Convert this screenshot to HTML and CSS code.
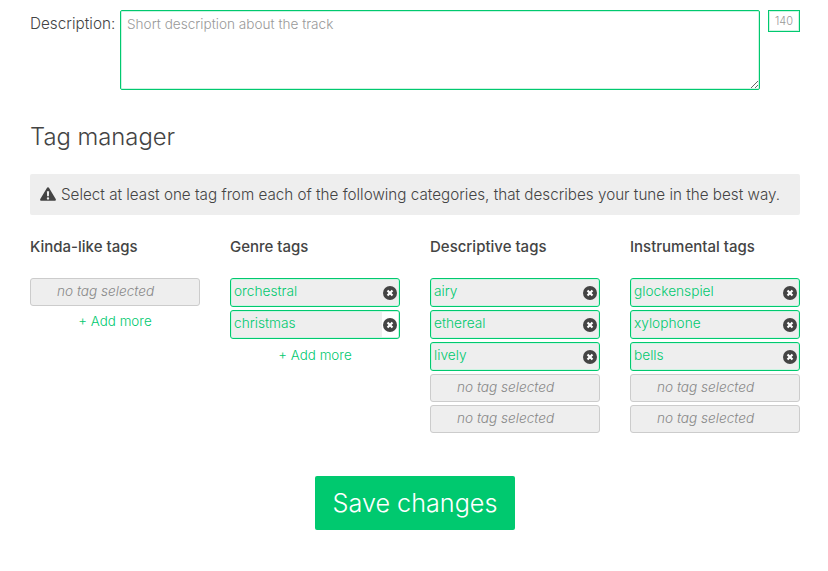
FILE: index.html
```html
<html>
  <head>
    <title>Tag manager</title>
    <link rel="stylesheet" href="styles.css">
  </head>
  <body>
    <div class="page">
      <div class="description-row">
        <label class="description-label" for="description">Description:</label>
        <textarea id="description" class="description-input" placeholder="Short description about the track"></textarea>
        <div class="counter">140</div>
      </div>

      <h2 class="section-title">Tag manager</h2>

      <div class="notice">
        <svg class="notice-icon" viewBox="0 0 16 14"><path fill-rule="evenodd" d="M8 0.2c.5 0 .9.3 1.1.7l6.6 11.2c.5.8-.1 1.7-1 1.7H1.3c-.9 0-1.5-.9-1-1.7L6.9.9C7.1.5 7.5.2 8 .2zM6.9 4.2l.2 5h1.8l.2-5zM8 10.2a1.2 1.2 0 1 0 0 2.4 1.2 1.2 0 0 0 0-2.4z"/></svg>
        <span>Select at least one tag from each of the following categories, that describes your tune in the best way.</span>
      </div>

      <div class="tag-columns">
        <div class="tag-column">
          <h4 class="tag-heading">Kinda-like tags</h4>
          <div class="tag-empty">no tag selected</div>
          <a class="add-more">+ Add more</a>
        </div>

        <div class="tag-column">
          <h4 class="tag-heading">Genre tags</h4>
          <div class="tag"><span class="tag-name">orchestral</span><span class="tag-remove"><svg viewBox="0 0 13 13"><circle cx="6.5" cy="6.5" r="6.5"/><path d="M4.2 4.2l4.6 4.6M8.8 4.2l-4.6 4.6"/></svg></span></div>
          <div class="tag tag-hover"><span class="tag-name">christmas</span><span class="tag-remove"><svg viewBox="0 0 13 13"><circle cx="6.5" cy="6.5" r="6.5"/><path d="M4.2 4.2l4.6 4.6M8.8 4.2l-4.6 4.6"/></svg></span></div>
          <a class="add-more add-more-low">+ Add more</a>
        </div>

        <div class="tag-column">
          <h4 class="tag-heading">Descriptive tags</h4>
          <div class="tag"><span class="tag-name">airy</span><span class="tag-remove"><svg viewBox="0 0 13 13"><circle cx="6.5" cy="6.5" r="6.5"/><path d="M4.2 4.2l4.6 4.6M8.8 4.2l-4.6 4.6"/></svg></span></div>
          <div class="tag"><span class="tag-name">ethereal</span><span class="tag-remove"><svg viewBox="0 0 13 13"><circle cx="6.5" cy="6.5" r="6.5"/><path d="M4.2 4.2l4.6 4.6M8.8 4.2l-4.6 4.6"/></svg></span></div>
          <div class="tag"><span class="tag-name">lively</span><span class="tag-remove"><svg viewBox="0 0 13 13"><circle cx="6.5" cy="6.5" r="6.5"/><path d="M4.2 4.2l4.6 4.6M8.8 4.2l-4.6 4.6"/></svg></span></div>
          <div class="tag-empty">no tag selected</div>
          <div class="tag-empty">no tag selected</div>
        </div>

        <div class="tag-column">
          <h4 class="tag-heading">Instrumental tags</h4>
          <div class="tag"><span class="tag-name">glockenspiel</span><span class="tag-remove"><svg viewBox="0 0 13 13"><circle cx="6.5" cy="6.5" r="6.5"/><path d="M4.2 4.2l4.6 4.6M8.8 4.2l-4.6 4.6"/></svg></span></div>
          <div class="tag"><span class="tag-name">xylophone</span><span class="tag-remove"><svg viewBox="0 0 13 13"><circle cx="6.5" cy="6.5" r="6.5"/><path d="M4.2 4.2l4.6 4.6M8.8 4.2l-4.6 4.6"/></svg></span></div>
          <div class="tag"><span class="tag-name">bells</span><span class="tag-remove"><svg viewBox="0 0 13 13"><circle cx="6.5" cy="6.5" r="6.5"/><path d="M4.2 4.2l4.6 4.6M8.8 4.2l-4.6 4.6"/></svg></span></div>
          <div class="tag-empty">no tag selected</div>
          <div class="tag-empty">no tag selected</div>
        </div>
      </div>

      <div class="actions">
        <button class="save-button">Save changes</button>
      </div>
    </div>
  </body>
</html>
```

FILE: styles.css
```css
html, body {
  margin: 0;
  background: white;
}
body {
  font-family: "Inter", "Liberation Sans", sans-serif;
  font-size: 14px;
  font-weight: 300;
  color: #444444;
}
.page {
  width: 770px;
  padding: 10px 28px 0 30px;
}
.description-row {
  display: flex;
  align-items: flex-start;
}
.description-label {
  width: 90px;
  padding-top: 5px;
  font-size: 15.3px;
  line-height: 18px;
}
.description-input {
  display: block;
  width: 640px;
  height: 80px;
  margin: 0;
  padding: 5px 6px;
  box-sizing: border-box;
  border: 1px solid #00C96F;
  border-radius: 2px;
  box-shadow: inset 0 0 0 1px rgba(0, 201, 111, 0.2);
  outline: none;
  font-family: "Inter", "Liberation Sans", sans-serif;
  font-size: 13.6px;
  font-weight: 300;
  line-height: 16px;
}
.description-input::placeholder {
  color: #999999;
  opacity: 1;
}
.counter {
  width: 32px;
  height: 22px;
  margin-left: 8px;
  box-sizing: border-box;
  border: 1px solid #00C96F;
  box-shadow: inset 0 0 0 1px rgba(0, 201, 111, 0.2);
  font-size: 11px;
  line-height: 20px;
  text-align: center;
  color: #999999;
}
.section-title {
  margin: 32px 0 0 0;
  font-size: 23.8px;
  line-height: 30px;
  font-weight: 300;
  color: #444444;
}
.notice {
  display: flex;
  align-items: center;
  height: 41px;
  margin-top: 22px;
  padding-left: 10px;
  padding-bottom: 1px;
  box-sizing: border-box;
  background: #EEEEEE;
  border-radius: 2px;
  font-size: 15.23px;
}
.notice-icon {
  width: 16px;
  height: 14px;
  margin-right: 5px;
  fill: #444444;
}
.tag-columns {
  display: flex;
  gap: 30px;
  margin-top: 22px;
}
.tag-column {
  width: 170px;
}
.tag-heading {
  margin: 0 0 22px 0;
  font-size: 15px;
  line-height: 19px;
  font-weight: 500;
  color: #444444;
}
.tag {
  display: flex;
  height: 29px;
  margin-bottom: 3px;
  box-sizing: border-box;
  border: 1px solid #00C96F;
  border-radius: 3px;
  box-shadow: inset 0 0 0 1px rgba(0, 201, 111, 0.2);
  padding: 1px;
  line-height: 23px;
  font-size: 13.7px;
  color: #00C96F;
}
.tag-name {
  flex: 1;
  padding-left: 2px;
  background: #EEEEEE;
}
.tag-remove {
  display: flex;
  align-items: center;
  width: 15px;
  padding-left: 1px;
  background: #EEEEEE;
}
.tag-hover .tag-remove {
  background: white;
}
.tag-remove svg {
  width: 14px;
  height: 14px;
  fill: #444444;
  stroke: white;
  stroke-width: 2;
}
.tag-remove circle {
  stroke: none;
}
.tag-empty {
  height: 28px;
  margin-bottom: 3px;
  box-sizing: border-box;
  border: 1px solid #CCCCCC;
  border-radius: 3px;
  background: #EEEEEE;
  padding-left: 26px;
  font-size: 13.6px;
  font-style: italic;
  line-height: 25px;
  color: #888888;
}
.add-more {
  display: block;
  margin-top: 7px;
  text-align: center;
  font-size: 13.4px;
  line-height: 16px;
  color: #00C96F;
}
.add-more-low {
  margin-top: 8px;
}
.actions {
  display: flex;
  justify-content: center;
  margin-top: 40px;
}
.save-button {
  width: 200px;
  height: 54px;
  padding-bottom: 1px;
  border: none;
  border-radius: 2px;
  background: #00C96F;
  color: white;
  font-family: "Inter", "Liberation Sans", sans-serif;
  font-size: 25.2px;
  font-weight: 300;
}
```
